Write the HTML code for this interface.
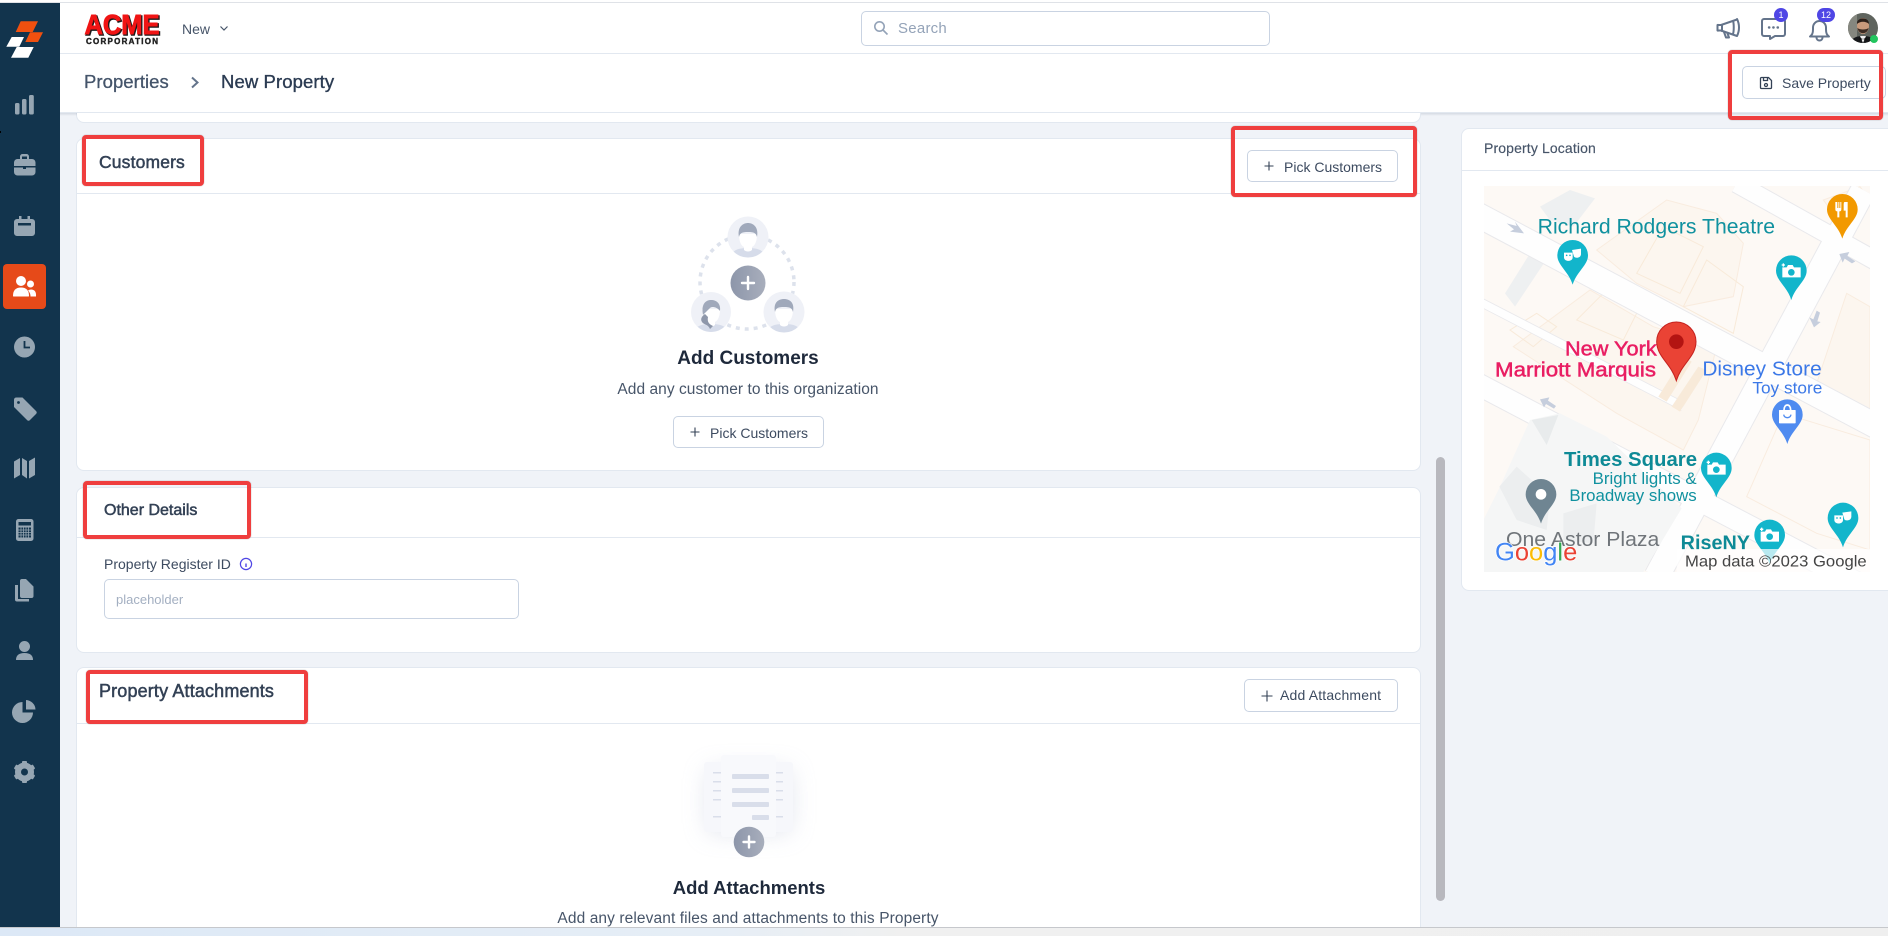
<!DOCTYPE html>
<html lang="en"><head><meta charset="utf-8"><title>New Property</title>
<style>
*{box-sizing:border-box}
html,body{margin:0;padding:0;width:1888px;height:936px;overflow:hidden;background:#f0f3f8;font-family:"Liberation Sans",sans-serif}
#root{position:relative;width:1888px;height:936px;overflow:hidden;background:#f0f3f8}
.a{position:absolute}
.t{position:absolute;white-space:nowrap;line-height:20px;height:20px}
.card{position:absolute;background:#fff;border:1px solid #e2e8f0;border-radius:8px}
.btn{position:absolute;background:#fff;border:1px solid #c9d3e2;border-radius:5px}
.line{position:absolute;height:1px;background:#e2e8f0}
.red{position:absolute;border:4px solid #ef3e3e;border-radius:4px;box-shadow:0 0 1px rgba(70,70,70,.6)}
.h{color:#334155;-webkit-text-stroke:.5px #334155}
.b{font-size:14px;color:#3d4b60}
.c{text-align:center}
svg{position:absolute;display:block}
</style></head><body><div id="root">
<div class="a" style="left:0;top:0;width:1888px;height:3px;background:#fff;border-bottom:1px solid #dfe2e7"></div>

<!-- remnant card -->
<div class="card" style="left:76px;top:90px;width:1345px;height:33px;border-radius:0 0 8px 8px"></div>

<!-- top bar -->
<div class="a" style="left:60px;top:3px;width:1828px;height:51px;background:#fff;border-bottom:1px solid #e2e8f0"></div>
<svg style="left:80px;top:8px" width="86" height="40" viewBox="0 0 86 40">
<text x="5.500" y="27" font-family="Liberation Sans" font-weight="700" font-size="28" fill="#1a1a1a" stroke="#1a1a1a" stroke-width="1.600" textLength="75" lengthAdjust="spacingAndGlyphs">ACME</text>
<text x="4.500" y="26" font-family="Liberation Sans" font-weight="700" font-size="28" fill="#f01414" stroke="#f01414" stroke-width=".9" textLength="75" lengthAdjust="spacingAndGlyphs">ACME</text>
<text x="6" y="36" font-family="Liberation Sans" font-weight="700" font-size="8" fill="#222" stroke="#222" stroke-width=".4" textLength="72" lengthAdjust="spacing">CORPORATION</text>
</svg>
<div class="t" style="left:182px;top:19px;font-size:14px;color:#475569">New</div>
<svg style="left:219px;top:25px" width="10" height="7" viewBox="0 0 10 7"><path d="M1.500 1.500 5 5l3.500-3.500" fill="none" stroke="#475569" stroke-width="1.200"/></svg>
<div class="a" style="left:861px;top:11px;width:409px;height:35px;background:#fff;border:1px solid #c9d3e2;border-radius:5px"></div>
<svg style="left:873px;top:20px" width="16" height="16" viewBox="0 0 16 16"><circle cx="6.500" cy="6.500" r="4.700" fill="none" stroke="#94a3b8" stroke-width="1.600"/><path d="m10 10 4.500 4.500" stroke="#94a3b8" stroke-width="1.600"/></svg>
<div class="t" style="left:898px;top:19px;font-size:15px;color:#94a3b8;letter-spacing:.25px">Search</div>

<svg style="left:1710px;top:4px" width="178" height="46" viewBox="1710 4 178 46" fill="none" stroke="#64748b" stroke-width="2" stroke-linecap="round" stroke-linejoin="round">
<path d="M1737 19.500 1721 25h-2.500a2 2 0 0 0-1 0v5.500a2 2 0 0 0 1 0H1721l16 5.500c1.500-3 2-6 2-8.500s-.5-5.500-2-8.500Z"/>
<path d="M1722 25v6M1724 32l2 5.500h3l-1.500-4M1733 21c1 2.500 1 10 0 13"/>
<path d="M1764 19h19a2 2 0 0 1 2 2v13a2 2 0 0 1-2 2h-8l-5 3v-3h-6a2 2 0 0 1-2-2V21a2 2 0 0 1 2-2Z"/>
<path d="M1769 27.500h.3M1773.300 27.500h.3M1777.600 27.500h.3" stroke-width="2.400"/>
<path d="M1810 36.500c2-1.500 3-3 3-7v-2a6.500 6.500 0 0 1 13 0v2c0 4 1 5.500 3 7Z"/>
<path d="M1816.500 37.500a3 3 0 0 0 6 0"/>
</svg>
<div class="a c" style="left:1774px;top:8px;width:14px;height:14px;border-radius:7px;background:#4f46e5;color:#fff;font-size:9px;line-height:14px">1</div>
<div class="a c" style="left:1817px;top:8px;width:18px;height:14px;border-radius:7px;background:#4f46e5;color:#fff;font-size:9px;line-height:14px">12</div>
<svg style="left:1848px;top:13px" width="32" height="32" viewBox="0 0 32 32">
<defs><clipPath id="av"><circle cx="15" cy="15" r="15"/></clipPath></defs>
<g clip-path="url(#av)"><rect width="30" height="30" fill="#5f645e"/><rect x="0" width="9" height="30" fill="#85877f"/>
<path d="M2 32c1-7 6-9 13-9s12 2 13 9Z" fill="#16181a"/><path d="M12 23h6l-3 7Z" fill="#eee"/>
<ellipse cx="15" cy="13" rx="6" ry="8" fill="#c89a7c"/><path d="M9 11c-1-7 12-8 12 0-3-3-9-3-12 0Z" fill="#2c211b"/><path d="M9.500 15c1 7 10 7 11 0-2 2-9 2-11 0Z" fill="#3b2c24"/><path d="M11 24.500l4 1.500 4-1.500v3l-4-1.500-4 1.500Z" fill="#111"/></g>
<circle cx="26" cy="26" r="4" fill="#22c55e"/></svg>

<!-- breadcrumb -->
<div class="a" style="left:60px;top:54px;width:1828px;height:59px;background:#fff;border-bottom:1px solid #e2e8f0"></div>
<div class="t" style="left:84px;top:72px;font-size:18.500px;letter-spacing:.05px;color:#44546a;-webkit-text-stroke:.3px #44546a">Properties</div>
<svg style="left:189px;top:75px" width="12" height="15" viewBox="0 0 12 15"><path d="m3 2.500 5.500 5-5.500 5" fill="none" stroke="#64748b" stroke-width="2"/></svg>
<div class="t" style="left:221px;top:72px;font-size:18.500px;letter-spacing:.1px;color:#2b3b52;-webkit-text-stroke:.35px #2b3b52">New Property</div>
<div class="a" style="left:60px;top:113px;width:17px;height:3px;background:linear-gradient(rgba(100,116,139,.2),rgba(100,116,139,0))"></div>
<div class="a" style="left:1421px;top:113px;width:467px;height:3px;background:linear-gradient(rgba(100,116,139,.2),rgba(100,116,139,0))"></div>

<!-- save -->
<div class="btn" style="left:1742px;top:66px;width:144px;height:33px"></div>
<svg style="left:1759px;top:76px" width="14" height="14" viewBox="0 0 14 14" fill="none" stroke="#334155" stroke-width="1.300"><path d="M2.500 1.500h7l3 3v7a1 1 0 0 1-1 1h-9a1 1 0 0 1-1-1v-9a1 1 0 0 1 1-1Z"/><path d="M4.500 1.500v3h4v-3"/><circle cx="7" cy="9" r="1.500"/></svg>
<div class="t b" style="left:1782px;top:73px">Save Property</div>

<!-- customers card -->
<div class="card" style="left:76px;top:138px;width:1345px;height:333px"></div>
<div class="line" style="left:77px;top:193px;width:1343px"></div>
<div class="t h" style="left:99px;top:152px;font-size:17.500px;letter-spacing:.15px">Customers</div>
<div class="btn" style="left:1247px;top:150px;width:151px;height:32px"></div>
<svg style="left:1264px;top:161px" width="10" height="10" viewBox="0 0 10 10"><path d="M5 .5v9M.5 5h9" stroke="#334155" stroke-width="1.100"/></svg>
<div class="t b" style="left:1284px;top:157px">Pick Customers</div>

<svg style="left:680px;top:205px" width="140" height="130" viewBox="680 205 140 130">
<defs><linearGradient id="g1" x1="0" x2="1" y1="0" y2="0"><stop offset="0" stop-color="#8d96aa"/><stop offset="1" stop-color="#a8aebc"/></linearGradient>
<clipPath id="c1"><circle cx="748" cy="237" r="20.500"/></clipPath><clipPath id="c2"><circle cx="711" cy="312" r="20"/></clipPath><clipPath id="c3"><circle cx="784" cy="312" r="20.500"/></clipPath></defs>
<circle cx="747" cy="282" r="47" fill="none" stroke="#dde2ec" stroke-width="3.500" stroke-dasharray="4 5"/>
<circle cx="748" cy="237" r="20.500" fill="#eff1f7"/><circle cx="711" cy="312" r="20" fill="#eff1f7"/><circle cx="784" cy="312" r="20.500" fill="#eff1f7"/>
<g clip-path="url(#c1)"><path d="M730 258c2-8 8-10 18-10s16 2 18 10Z" fill="#d6dcea"/><path d="M739 234c0 9 3 12 5 13v3c2 2 6 2 8 0v-3c2-1 5-4 5-13Z" fill="#fff"/><path d="M739 237c-2-10 4-14 9-14s11 4 9 14c-1-4-3-5-9-5s-8 1-9 5Z" fill="#a0a9bb"/></g>
<g clip-path="url(#c2)"><path d="M693 334c2-8 8-10 18-10s16 2 18 10Z" fill="#d6dcea"/><path d="M702 309c0 9 3 12 5 13v3c2 2 6 2 8 0v-3c2-1 5-4 5-13Z" fill="#fff"/><path d="M703 315c-2-10 2-15 8-15s10 4 9 11c-3-4-8-5-10-3-2 2-4 4-7 7Z" fill="#a0a9bb"/><path d="M705 314c-3 2-5 5-3 8 2 3 6 2 8 7l3-3c-4-2-6-4-5-9Z" fill="#8e97aa"/></g>
<g clip-path="url(#c3)"><path d="M766 334c2-8 8-10 18-10s16 2 18 10Z" fill="#d6dcea"/><path d="M775 309c0 9 3 12 5 13v3c2 2 6 2 8 0v-3c2-1 5-4 5-13Z" fill="#fff"/><path d="M775 312c-2-10 4-13 9-13s11 3 9 13c-1-4-3-5-9-5s-8 1-9 5Z" fill="#a0a9bb"/></g>
<circle cx="748" cy="283" r="17.500" fill="url(#g1)"/><path d="M748 277v12M742 283h12" stroke="#fff" stroke-width="2.400" stroke-linecap="round"/>
</svg>
<div class="t c" style="left:600px;top:349px;width:296px;font-size:19px;font-weight:700;color:#1e293b">Add Customers</div>
<div class="t c" style="left:560px;top:380px;width:376px;font-size:15.500px;letter-spacing:.05px;color:#475569">Add any customer to this organization</div>
<div class="btn" style="left:673px;top:416px;width:151px;height:32px"></div>
<svg style="left:690px;top:427px" width="10" height="10" viewBox="0 0 10 10"><path d="M5 .5v9M.5 5h9" stroke="#334155" stroke-width="1.100"/></svg>
<div class="t b" style="left:710px;top:423px">Pick Customers</div>

<!-- other details -->
<div class="card" style="left:76px;top:487px;width:1345px;height:166px"></div>
<div class="line" style="left:77px;top:537px;width:1343px"></div>
<div class="t h" style="left:104px;top:501px;font-size:16px">Other Details</div>
<div class="t b" style="left:104px;top:554px">Property Register ID</div>
<svg style="left:239px;top:557px" width="14" height="14" viewBox="0 0 14 14"><circle cx="7" cy="7" r="5.600" fill="none" stroke="#4f46e5" stroke-width="1.200"/><path d="M7 6.500v3.500M7 4h.01" stroke="#4f46e5" stroke-width="1.400"/></svg>
<div class="a" style="left:104px;top:579px;width:415px;height:40px;background:#fff;border:1px solid #c9d3e2;border-radius:5px"></div>
<div class="t" style="left:116px;top:589.500px;font-size:13px;color:#a3afc1">placeholder</div>

<!-- attachments -->
<div class="card" style="left:76px;top:667px;width:1345px;height:265px;border-radius:8px 8px 0 0"></div>
<div class="line" style="left:77px;top:723px;width:1343px"></div>
<div class="t h" style="left:99px;top:681px;font-size:18px;letter-spacing:.15px">Property Attachments</div>
<div class="btn" style="left:1244px;top:679px;width:154px;height:33px"></div>
<svg style="left:1261px;top:690px" width="12" height="12" viewBox="0 0 12 12"><path d="M6 .5v11M.5 6h11" stroke="#334155" stroke-width="1.100"/></svg>
<div class="t b" style="left:1280px;top:685px;letter-spacing:.17px">Add Attachment</div>

<svg style="left:670px;top:735px" width="160" height="140" viewBox="670 735 160 140">
<defs><filter id="bl" x="-50%" y="-50%" width="200%" height="200%"><feGaussianBlur stdDeviation="12"/></filter></defs>
<rect x="708" y="770" width="82" height="62" rx="3" fill="#c9cfe0" opacity=".6" filter="url(#bl)"/>
<rect x="704" y="762" width="89" height="70" rx="3" fill="#f6f7fb"/>
<rect x="721" y="755" width="55" height="82" rx="3" fill="#f8f9fc"/>
<g fill="#d9deea"><rect x="732" y="774" width="37" height="5" rx="1"/><rect x="732" y="788" width="37" height="5" rx="1"/><rect x="732" y="802" width="37" height="5" rx="1"/><rect x="752" y="815" width="17" height="5" rx="1"/>
<rect x="713" y="772" width="8" height="1.500"/><rect x="713" y="781" width="8" height="1.500"/><rect x="713" y="790" width="8" height="1.500"/><rect x="713" y="799" width="8" height="1.500"/><rect x="713" y="816" width="8" height="1.500"/>
<rect x="776" y="772" width="7" height="1.500"/><rect x="776" y="781" width="7" height="1.500"/><rect x="776" y="790" width="7" height="1.500"/><rect x="776" y="799" width="7" height="1.500"/><rect x="776" y="816" width="7" height="1.500"/></g>
<circle cx="749" cy="842" r="15.300" fill="url(#g1)"/><path d="M749 836.500v11M743.500 842h11" stroke="#fff" stroke-width="2.400" stroke-linecap="round"/>
</svg>
<div class="t c" style="left:601px;top:878px;width:296px;font-size:18.500px;font-weight:700;color:#1e293b">Add Attachments</div>
<div class="t c" style="left:448px;top:909px;width:600px;font-size:15.500px;letter-spacing:.1px;color:#475569">Add any relevant files and attachments to this Property</div>

<!-- scrollbar -->
<div class="a" style="left:1436px;top:457px;width:9px;height:444px;border-radius:5px;background:#b8b8be"></div>

<!-- right card -->
<div class="card" style="left:1461px;top:128px;width:440px;height:463px"></div>
<div class="line" style="left:1462px;top:170px;width:426px"></div>
<div class="t" style="left:1484px;top:138px;font-size:14px;letter-spacing:.13px;color:#475569;-webkit-text-stroke:.15px #475569">Property Location</div>

<svg style="left:1484px;top:186px" width="386" height="386" viewBox="102 198 1158 1158" font-family="Liberation Sans">
<defs>
<path id="pin" d="M-46 0A46 46 0 1 1 46 0C46 30 12 48 0 88C-12 48-46 30-46 0Z"/>
<g id="cam"><use href="#pin" fill="#12b5cb"/><path d="M-27-14h13l4-7h14l4 7h20v30h-55Z" fill="#fff" transform="translate(0 4)"/><circle cy="5" r="10" fill="#12b5cb"/><path d="M-24-22v10M-29-17h10" stroke="#fff" stroke-width="4"/></g>
<g id="thr"><use href="#pin" fill="#12b5cb"/><path d="M-26-8h26v14c0 14-26 14-26 0Z" fill="#fff"/><path d="M-2-16 25-20v16c0 12-16 14-21 8Z" fill="#fff"/><circle cx="-18" cy="0" r="2.500" fill="#12b5cb"/><circle cx="-8" cy="0" r="2.500" fill="#12b5cb"/></g>
</defs>
<rect x="102" y="198" width="1158" height="1158" fill="#fdf9f5"/>
<g fill="#fcf6ef" stroke="#f9ecdf" stroke-width="3">
<path d="M190 680 420 510 610 620 800 680 745 900 700 990 500 880Z"/>
<path d="M440 390 650 240 800 280 880 370 850 530 700 560 560 490Z"/>
<path d="M890 1130 1000 880 1260 960 1260 1290 1100 1240Z" fill="#fdf9f5"/>
<path d="M1120 240 1230 200 1260 240 1180 320Z"/>
<path d="M1100 790 1190 520 1260 560 1260 870Z"/>
</g>
<g fill="#eef0f1"><path d="M270 260 360 210 435 235 370 320 300 300Z"/><path d="M165 520 240 400 285 425 195 560Z"/></g>
<g fill="none" stroke="#f8ead9" stroke-width="3"><path d="M560 460 640 320 760 380 690 520ZM700 560 770 420 880 500 850 640ZM180 630 260 580 320 620 250 680ZM380 600 460 520 560 580 520 660Z"/></g>
<g fill="none">
<g stroke="#e9e9ec"><path d="M60 272 1300 930" stroke-width="78"/><path d="M60 530 700 860" stroke-width="28"/><path d="M60 780 1300 1430" stroke-width="70"/><path d="M1240 210 620 1370" stroke-width="80"/><path d="M860 190 1290 430" stroke-width="60"/></g>
<g stroke="#fefefe"><path d="M60 272 1300 930" stroke-width="72"/><path d="M60 530 700 860" stroke-width="23"/><path d="M60 780 1300 1430" stroke-width="64"/><path d="M1240 210 620 1370" stroke-width="74"/><path d="M860 190 1290 430" stroke-width="54"/></g>
</g>
<path d="M150 1100 240 900 330 880 470 950 695 1165 580 1356H100V1200Z" fill="#f5f6f6"/>
<path d="M148 1100 200 1040 300 1130 290 1230 200 1200Z" fill="#ecEeef"/><path d="M340 1180 440 1150 430 1270 340 1260Z" fill="#ecEeef"/><path d="M245 900 325 885 290 975Z" fill="#e8ebec"/>
<g fill="#f8ead9"><path d="M625 830 700 710 725 725 650 845Z"/><path d="M665 860 745 740 770 750 690 875Z"/></g>
<g fill="#c6cedd"><path d="M170 310 200 318 195 305 222 340 180 335 192 328Z"/><path d="M1168 402 1198 396 1192 408 1216 424 1206 430 1184 416 1178 428Z"/><path d="M1092 622 1078 592 1090 598 1100 572 1110 578 1102 604 1112 606Z"/><path d="M270 838 298 832 294 842 318 858 312 866 288 852 282 862Z"/></g>
<text x="263" y="340" font-size="64" fill="#10919f" textLength="712" lengthAdjust="spacingAndGlyphs">Richard Rodgers Theatre</text>
<g transform="translate(1177 268)"><use href="#pin" fill="#f29900"/><path d="M-21-22V0q0 6 6 6v18h6V6q6 0 6-6V-22h-3V-4h-3V-22H-12V-4h-3V-22ZM7-22q-3 0-3 8V4h6V24h6V-22Z" fill="#fff"/></g>
<use href="#thr" x="368" y="406"/>
<use href="#cam" x="1024" y="452"/>
<text x="345" y="706" font-size="62" fill="#e91e63" stroke="#e91e63" stroke-width="1.500" textLength="275" lengthAdjust="spacingAndGlyphs">New York</text>
<text x="135" y="770" font-size="62" fill="#e91e63" stroke="#e91e63" stroke-width="1.500" textLength="483" lengthAdjust="spacingAndGlyphs">Marriott Marquis</text>
<text x="757" y="767" font-size="62" fill="#3b78e7" textLength="358" lengthAdjust="spacingAndGlyphs">Disney Store</text>
<text x="907" y="820" font-size="50" fill="#3b78e7" textLength="210" lengthAdjust="spacingAndGlyphs">Toy store</text>
<path d="M620 665A59 59 0 0 1 738 665C738 710 695 730 679 782C663 730 620 710 620 665Z" fill="#ea4335" stroke="#c5221f" stroke-width="3"/><circle cx="679" cy="665" r="22" fill="#b31412"/>
<g transform="translate(1012 884)"><use href="#pin" fill="#4f8bf0"/><rect x="-25" y="-14" width="50" height="40" rx="2" fill="#fff"/><path d="M-10-14c0-20 20-20 20 0" stroke="#fff" stroke-width="5" fill="none"/><path d="M-11 0c2 12 20 12 22 0" fill="none" stroke="#4f8bf0" stroke-width="4"/></g>
<text x="342" y="1038" font-size="62" font-weight="700" fill="#0e8a96" textLength="399" lengthAdjust="spacingAndGlyphs">Times Square</text>
<text x="428" y="1092" font-size="50" fill="#10919f" textLength="312" lengthAdjust="spacingAndGlyphs">Bright lights &amp;</text>
<text x="358" y="1143" font-size="50" fill="#10919f" textLength="382" lengthAdjust="spacingAndGlyphs">Broadway shows</text>
<use href="#cam" x="799" y="1044"/>
<g transform="translate(273 1123)"><use href="#pin" fill="#6f8592"/><circle r="16" fill="#fff"/></g>
<text x="168" y="1278" font-size="62" fill="#70757a" textLength="460" lengthAdjust="spacingAndGlyphs">One Astor Plaza</text>
<text x="692" y="1288" font-size="62" font-weight="700" fill="#0e8a96" textLength="208" lengthAdjust="spacingAndGlyphs">RiseNY</text>
<use href="#cam" x="959" y="1245"/>
<use href="#thr" x="1179" y="1194"/>
<rect x="680" y="1287" width="580" height="69" fill="#fff" fill-opacity=".7"/>
<text x="705" y="1340" font-size="48" fill="#444" textLength="545" lengthAdjust="spacingAndGlyphs">Map data ©2023 Google</text>
<text x="135" y="1322" font-size="76" font-weight="400" stroke="#fff" stroke-width="4" paint-order="stroke" textLength="247" lengthAdjust="spacingAndGlyphs"><tspan fill="#4285f4">G</tspan><tspan fill="#ea4335">o</tspan><tspan fill="#fbbc05">o</tspan><tspan fill="#4285f4">g</tspan><tspan fill="#34a853">l</tspan><tspan fill="#ea4335">e</tspan></text>
</svg>

<!-- sidebar -->
<div class="a" style="left:0;top:3px;width:60px;height:924px;background:#12344d"></div>
<div class="a" style="left:3px;top:264px;width:43px;height:45px;border-radius:4px;background:#e64a19"></div>
<svg style="left:0;top:0" width="60" height="927" viewBox="0 0 60 927">
<path d="M20.700 21.300H38L32.700 32H15.700Z M30 32.300H43L38 42H25.300Z" fill="#f0500f"/>
<path d="M11.700 37H24L19.300 46.700H6.300Z M16.700 47H33.700L28.300 57.700H11Z" fill="#fff"/>
<g fill="#96a6b3">
<rect x="15" y="103" width="4.500" height="11.500" rx="1.500"/><rect x="22" y="99" width="4.500" height="15.500" rx="1.500"/><rect x="29" y="95" width="4.800" height="19.500" rx="1.500"/>
<path d="M20 159v-2.500a2.500 2.500 0 0 1 2.500-2.500h4a2.500 2.500 0 0 1 2.500 2.500V159h3a3.500 3.500 0 0 1 3.500 3.500v3.500H14v-3.500a3.500 3.500 0 0 1 3.500-3.500Zm2 0h5v-2.500h-5ZM14 167.500h9v1.500h3v-1.500h9.500V172a3.500 3.500 0 0 1-3.500 3.500H17.500a3.500 3.500 0 0 1-3.500-3.500Z"/>
<path d="M19 216h2.500v3h6v-3H30v3h2a3 3 0 0 1 3 3v11a3 3 0 0 1-3 3H17a3 3 0 0 1-3-3v-11a3 3 0 0 1 3-3h2Zm-1 7v2.500h13V223Z"/>
<circle cx="24.500" cy="347" r="10.500"/>
<path d="M14 400q0-2.500 2.500-2.500h6L36 411q1.500 1.500 0 3l-6 6q-1.500 1.500-3 0L14 407Z"/>
<path d="M14 461.500 20 458v17l-6 3.500ZM22 458l5 3v17.500l-5-3.500ZM29 461l6-3.500v17.500l-6 3.500Z"/>
<rect x="16" y="519" width="17.500" height="22" rx="2.500"/>
<path d="M25 579h1l7.500 7.500V596a2 2 0 0 1-2 2H22a2 2 0 0 1-2-2V581a2 2 0 0 1 2-2ZM15 585h3v14h11v2.500H17a2 2 0 0 1-2-2Z"/>
<circle cx="24.500" cy="646.500" r="5.500"/><path d="M16 660q0-7 8.500-7t8.500 7Z"/>
<path d="M22.500 702v10.500h10.500A10.500 10.500 0 1 1 22.500 702Z"/><path d="M26 700a10 10 0 0 1 9.500 9.500H26Z"/>
<g transform="translate(24.500 772)"><circle r="7" fill="none" stroke="#96a6b3" stroke-width="5"/><rect x="-2.500" y="-11" width="5" height="22" rx="1"/><rect x="-2.500" y="-11" width="5" height="22" rx="1" transform="rotate(60)"/><rect x="-2.500" y="-11" width="5" height="22" rx="1" transform="rotate(120)"/><circle r="3.500" fill="#12344d"/></g>
</g>
<path d="M24.500 341v6.500h5.500" fill="none" stroke="#12344d" stroke-width="1.800"/>
<circle cx="18.500" cy="402.500" r="1.400" fill="#12344d"/>
<rect x="18.500" y="522" width="12.500" height="3.500" fill="#12344d"/>
<rect x="18.500" y="527.500" width="12.500" height="10" fill="#12344d"/>
<path d="M21 527.500v10M23.500 527.500v10M26 527.500v10M28.500 527.500v10M18.500 530h12.500M18.500 532.500h12.500M18.500 535h12.500" stroke="#96a6b3" stroke-width=".8"/>
<g fill="#fff"><circle cx="21" cy="281" r="5"/><path d="M13 296q0-8.500 8-8.500t8 8.500q0 .5-.5.5h-15q-.5 0-.5-.5Z"/><circle cx="30.500" cy="284" r="3.500"/><path d="M30.500 296.500h5.500q.5-7-5-7-1.500 0-3 1 2.500 2.500 2.500 6Z"/></g>
<rect x="0" y="131" width="1" height="2" fill="#000"/>
</svg>

<!-- bottom strip -->
<div class="a" style="left:0;top:927px;width:1888px;height:9px;background:linear-gradient(90deg,#dce8f6 0,#e6eef6 38%,#f0f0f0 48%,#efefef 100%);border-top:1px solid #c6c8cc"></div>

<!-- annotations -->
<div class="red" style="left:82px;top:135px;width:122px;height:51px"></div>
<div class="red" style="left:1231px;top:126px;width:186px;height:71px"></div>
<div class="red" style="left:83px;top:481px;width:168px;height:58px"></div>
<div class="red" style="left:86px;top:670px;width:222px;height:54px"></div>
<div class="red" style="left:1728px;top:50px;width:155px;height:70px"></div>
</div></body></html>
